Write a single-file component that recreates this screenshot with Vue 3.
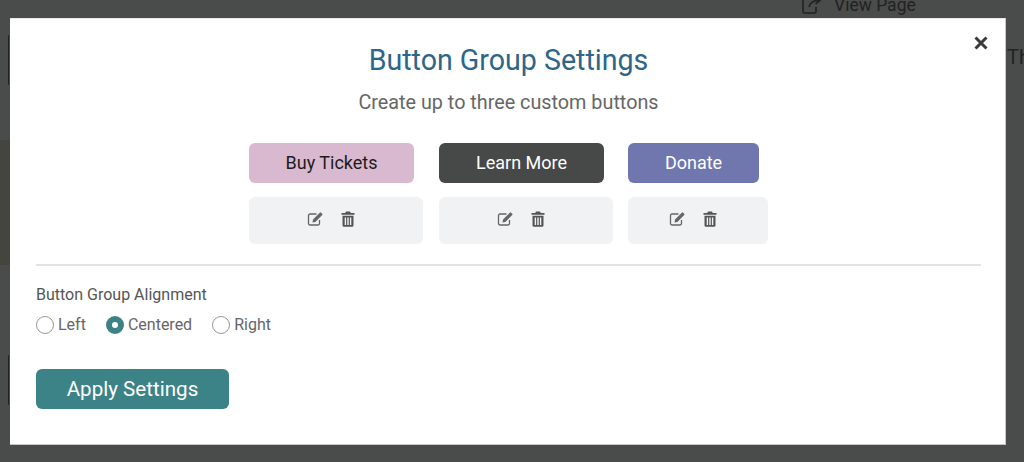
<script setup>
const groups = [
  { label: 'Buy Tickets', cls: 'pink' },
  { label: 'Learn More', cls: 'dark' },
  { label: 'Donate', cls: 'violet' }
]
const aligns = ['Left', 'Centered', 'Right']
</script>

<template>
  <div class="page">
    <div class="under view">
      <svg width="22" height="20" viewBox="0 0 22 20" fill="none" stroke="#222" stroke-width="1.6">
        <path d="M10 4H3.500A1.500 1.500 0 0 0 2 5.500v11A1.500 1.500 0 0 0 3.500 18h10a1.500 1.500 0 0 0 1.500-1.500V12" />
        <path d="M8 12c1-4 4-6.500 10-6.500M14.500 2 19 5.500 14.500 9" />
      </svg>
      <span>View Page</span>
    </div>
    <div class="under th">Th</div>
    <div class="under edge edge-a"></div>
    <div class="under edge edge-b"></div>
    <div class="under blob"></div>
    <div class="modal">
      <div class="close">
        <svg width="14" height="14" viewBox="0 0 14 14" stroke="#3a3a3a" stroke-width="3" stroke-linecap="butt">
          <path d="M1.500 1.500l11 11M12.500 1.500l-11 11" />
        </svg>
      </div>
      <h2 class="title">Button Group Settings</h2>
      <p class="sub">Create up to three custom buttons</p>
      <div class="groups">
        <div v-for="g in groups" :key="g.label" class="group" :class="g.cls + '-group'">
          <div class="btn" :class="g.cls">{{ g.label }}</div>
          <div class="tools">
            <svg width="17" height="16" viewBox="0 0 17 16" fill="none">
              <path d="M9.500 3H3a1.500 1.500 0 0 0-1.500 1.500v8A1.500 1.500 0 0 0 3 14h8a1.500 1.500 0 0 0 1.500-1.500V9" stroke="#666" stroke-width="1.300" />
              <path d="M6 8.500 12.800 1.700a.9.9 0 0 1 1.300 0l1.100 1.100a.9.9 0 0 1 0 1.300L8.400 10.900 5.500 11.500z" fill="#666" />
            </svg>
            <svg width="14" height="16" viewBox="0 0 14 16">
              <path d="M5 0.500h4l.8 1.500H13.500v1.800H.5V2h3.700z" fill="#555" />
              <path fill-rule="evenodd" d="M1.500 4.800h11v9.400A1.500 1.500 0 0 1 11 15.700H3a1.500 1.500 0 0 1-1.500-1.500zM3.700 6.500v7.500h1.400V6.500zM6.300 6.500v7.500h1.400V6.500zM8.900 6.500v7.500h1.400V6.500z" fill="#555" />
            </svg>
          </div>
        </div>
      </div>
      <hr class="rule" />
      <div class="label">Button Group Alignment</div>
      <div class="radios">
        <div v-for="a in aligns" :key="a" class="radio">
          <span class="dot" :class="{ on: a === 'Centered' }"></span>
          <span>{{ a }}</span>
        </div>
      </div>
      <div class="apply">Apply Settings</div>
    </div>
  </div>
</template>

<style scoped>
.page {
  position: relative;
  width: 1024px;
  height: 462px;
  overflow: hidden;
  background: #4a4b4b;
  font-family: Roboto, "Liberation Sans", sans-serif;
  padding: 18px 0 0 10px;
  box-sizing: border-box;
}
.under {
  position: absolute;
  color: #222;
  font-size: 17.500px;
  line-height: 20px;
}
.view {
  left: 801px;
  top: -5px;
  display: flex;
  align-items: center;
  gap: 11px;
}
.th {
  left: 1007px;
  top: 47px;
  font-size: 20px;
}
.edge {
  left: 8px;
  width: 1px;
  background: #222;
}
.edge-a {
  top: 35px;
  height: 50px;
}
.edge-b {
  top: 355px;
  height: 50px;
}
.blob {
  left: 0;
  top: 140px;
  width: 10px;
  height: 125px;
  background: #454540;
}
.modal {
  position: relative;
  width: 996px;
  height: 427px;
  box-sizing: border-box;
  background: #fff;
  border-top: 1px solid #e8e8ec;
  border-bottom: 1px solid #c8c8c8;
  border-right: 1px solid #c8c8c8;
  padding: 24px 24px 0 26px;
}
.close {
  position: absolute;
  top: 17px;
  right: 17px;
  width: 14px;
  height: 14px;
  line-height: 0;
}
.title {
  margin: 0;
  text-align: center;
  font-size: 28.600px;
  line-height: 34px;
  font-weight: 400;
  color: #2c6688;
}
.sub {
  margin: 14px 0 0;
  text-align: center;
  font-size: 19.800px;
  line-height: 24px;
  color: #666;
}
.groups {
  display: flex;
  justify-content: center;
  gap: 16px;
  margin-top: 28px;
}
.group {
  display: flex;
  flex-direction: column;
  gap: 14px;
  width: 174px;
}
.violet-group {
  width: 140px;
  margin-left: -1px;
}
.btn {
  height: 40px;
  width: 165px;
  box-sizing: border-box;
  padding-bottom: 1px;
  border-radius: 6px;
  display: flex;
  align-items: center;
  justify-content: center;
  font-size: 18px;
  color: #fff;
}
.pink {
  background: #d9b9cf;
  color: #1c1c1c;
}
.dark {
  background: #474848;
}
.violet {
  background: #7076ae;
  width: 131px;
}
.tools {
  height: 47px;
  box-sizing: border-box;
  padding: 0 11px 3px 0;
  border-radius: 6px;
  background: #f1f2f4;
  display: flex;
  align-items: center;
  justify-content: center;
  gap: 17px;
}
.rule {
  margin: 20px 0 0;
  border: 0;
  height: 2px;
  background: #e2e3e3;
}
.label {
  margin-top: 20px;
  font-size: 16px;
  line-height: 18px;
  color: #555;
}
.radios {
  display: flex;
  gap: 20px;
  margin-top: 12px;
}
.radio {
  display: flex;
  align-items: center;
  gap: 4px;
  font-size: 16px;
  line-height: 18px;
  color: #666;
}
.dot {
  width: 18px;
  height: 18px;
  box-sizing: border-box;
  border-radius: 50%;
  border: 1px solid #999;
  background: #fff;
}
.dot.on {
  border: 6.500px solid #3c8387;
}
.apply {
  margin-top: 35px;
  width: 193px;
  height: 40px;
  border-radius: 6px;
  background: #3c8387;
  color: #fff;
  font-size: 20.600px;
  display: flex;
  align-items: center;
  justify-content: center;
}
</style>
